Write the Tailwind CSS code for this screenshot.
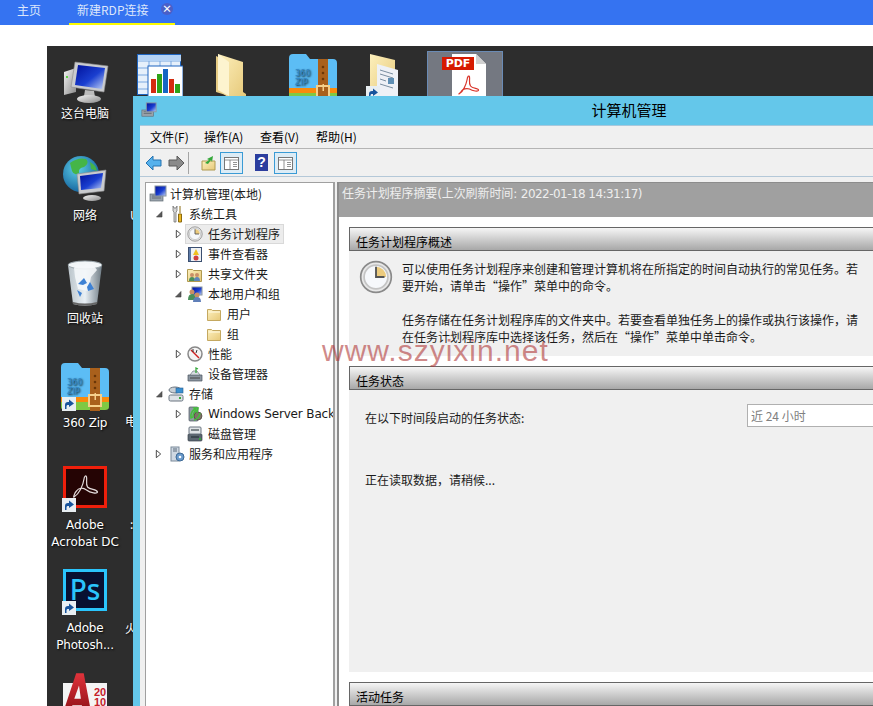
<!DOCTYPE html>
<html lang="zh-Hans">
<head>
<meta charset="UTF-8">
<title>新建RDP连接</title>
<script src="https://cdn.jsdelivr.net/npm/@tailwindcss/browser@4"></script>
</head>
<body class="bg-white overflow-hidden font-['Noto_Sans_CJK_SC','Liberation_Sans',sans-serif] text-[12px]">

<!-- shared icons -->
<svg class="absolute w-0 h-0">
  <defs>
    <linearGradient id="screen" x1="0" y1="0" x2="1" y2="1"><stop offset="0" stop-color="#00109a"/><stop offset=".55" stop-color="#1a3fd0"/><stop offset="1" stop-color="#c4d4f6"/></linearGradient>
    <linearGradient id="metal" x1="0" y1="0" x2="1" y2="1"><stop offset="0" stop-color="#f4f4f4"/><stop offset="1" stop-color="#8a8a8a"/></linearGradient>
    <linearGradient id="manila" x1="0" y1="0" x2="1" y2="1"><stop offset="0" stop-color="#fdf0bd"/><stop offset="1" stop-color="#e6c878"/></linearGradient>
    <radialGradient id="earth" cx=".4" cy=".35" r=".7"><stop offset="0" stop-color="#5fd0e8"/><stop offset="1" stop-color="#12609c"/></radialGradient>
    <linearGradient id="bin" x1="0" y1="0" x2="1" y2="0"><stop offset="0" stop-color="#b9c3c9"/><stop offset=".5" stop-color="#e9f0f5"/><stop offset="1" stop-color="#6f7c85"/></linearGradient>
    <linearGradient id="acad" x1="0" y1="0" x2="0" y2="1"><stop offset="0" stop-color="#e0333b"/><stop offset="1" stop-color="#8e1016"/></linearGradient>
    <symbol id="shortcut" viewBox="0 0 14 14"><rect width="14" height="14" fill="#e8eef2"/><path d="M3 12V8c0-2 1-3 3-3h1V2.500L12 6.500 7 10V8H6c-1 0-1.500 .5-1.500 1.500V12z" fill="#17539c"/></symbol>
    <symbol id="zipicon" viewBox="0 0 48 48">
      <path d="M0 4q0-4 4-4h13l4 5h23q4 0 4 4v29H0z" fill="#5cbdf5"/>
      <path d="M0 34h48v5H0z" fill="#f98a0c"/>
      <path d="M0 39h48v5q0 3-4 3H4q-4 0-4-3z" fill="#7fc944"/>
      <rect x="29" y="5" width="10" height="43" fill="#a9601c"/>
      <circle cx="34" cy="13" r="1.300" fill="#6b3607"/><circle cx="34" cy="19" r="1.300" fill="#6b3607"/><circle cx="34" cy="25" r="1.300" fill="#6b3607"/>
      <rect x="28" y="32" width="12" height="11" fill="none" stroke="#f6d08b" stroke-width="2"/>
      <rect x="33.500" y="30" width="1.500" height="7" fill="#f6d08b"/>
      <text x="6" y="22" font-size="8" font-family="DejaVu Sans" fill="#2f86c8">360</text>
      <text x="6" y="31" font-size="8" font-family="DejaVu Sans" fill="#2f86c8">ZIP</text>
    </symbol>
    <symbol id="folder16" viewBox="0 0 16 16">
      <path d="M1.500 3.500h4l1 1h8v10h-13z" fill="url(#manila)" stroke="#c4a860"/>
      <path d="M2.500 6h11.500" stroke="#fffbe6"/>
    </symbol>
    <symbol id="clock16" viewBox="0 0 20 20">
      <circle cx="10" cy="10" r="9" fill="#e8e8e8" stroke="#8a8a8a"/>
      <circle cx="10" cy="10" r="7" fill="#f6f8fb" stroke="#c4c4c4"/>
      <path d="M10 10V4a6 6 0 0 1 6 6z" fill="#eccb7d"/>
      <path d="M10 4v6h5" fill="none" stroke="#555" stroke-width="1.100"/>
    </symbol>
    <symbol id="pc16" viewBox="0 0 18 18">
      <rect x="1" y="9" width="13" height="7" fill="#9aa4ac" stroke="#5f6a72" stroke-width=".7"/>
      <path d="M3 11h9M3 13h9" stroke="#4d5860" stroke-width=".7"/>
      <rect x="6" y="1" width="11" height="10" fill="url(#screen)" stroke="#8a96a0"/>
    </symbol>
    <symbol id="tri-open" viewBox="0 0 8 8"><path d="M7 1.500V7H1.500z" fill="#595959" stroke="#404040" stroke-width=".6"/></symbol>
    <symbol id="tri-closed" viewBox="0 0 8 10"><path d="M1.500 .8 6.500 5 1.500 9.200z" fill="#fff" stroke="#333"/></symbol>
    <symbol id="winbtn" viewBox="0 0 23 22">
      <rect x=".5" y=".5" width="22" height="21" fill="#dcecf6" stroke="#3a9bd5"/>
      <rect x="4.500" y="5.500" width="14" height="12" fill="#fff" stroke="#777"/>
      <path d="M4.500 8h14M10 8v9.500M13 10.500h4M13 12.500h4M13 14.500h4" stroke="#777" stroke-width=".8"/>
    </symbol>
  </defs>
</svg>

<!-- 顶部标签栏 -->
<nav class="h-[25px] bg-[#3573f1] flex text-[#dce6fb] leading-[20px]">
  <a class="ml-[17px] w-[24px] whitespace-nowrap">主页</a>
  <div class="ml-[28px] w-[106px] h-[25px] border-b-2 border-[#fbfb00] flex pl-[8px]">
    <span class="w-[72px] whitespace-nowrap">新建RDP连接</span>
    <span class="ml-[12px] mt-[3px] w-[12px] h-[12px] rounded-full bg-[#4a5fc8] text-white text-[10px] leading-[12px] text-center font-bold">×</span>
  </div>
</nav>

<!-- 远程桌面 -->
<main class="relative ml-[47px] mt-[21px] h-[660px] bg-[#2d2d2d] overflow-hidden text-white [text-shadow:1px_1px_2px_#000]">

  <!-- 第一列图标 -->
  <div class="absolute left-0 top-0 w-[76px] text-center">
    <div class="absolute left-0 top-[12px] w-[76px]">
      <svg class="mx-auto w-[48px] h-[46px]" viewBox="0 0 48 46">
        <path d="M3 14l12-4v24l-12 3z" fill="url(#metal)"/>
        <rect x="5" y="18" width="2" height="2" fill="#5fd34a"/>
        <path d="M14 4l33 4-4 26-33-5z" fill="#c9cbce" stroke="#8b8b8b" stroke-width=".6"/>
        <path d="M17 7l27 3-3 21-27-4z" fill="url(#screen)"/>
        <path d="M24 32l9 1 1 6-11-1z" fill="#bcbcbc"/>
        <ellipse cx="28" cy="41" rx="12" ry="4" fill="url(#metal)"/>
      </svg>
      <p class="mt-[1px] text-center leading-[16px] text-[12px]">这台电脑</p>
    </div>
    <div class="absolute left-0 top-[109px] w-[76px]">
      <svg class="ml-[15px] w-[46px] h-[46px]" viewBox="0 0 46 46">
        <circle cx="19" cy="19" r="18" fill="url(#earth)"/>
        <path d="M8 8q8-6 16-4 4 4-2 8-6 1-5 6-5 3-7-2zM17 26q6-2 9 2-1 6-6 7-4-4-3-9zM28 7q6 3 7 9l-6-2z" fill="#45b548"/>
        <path d="M15 19l29-4-2 21-25 3z" fill="#c9cbce" stroke="#8b8b8b" stroke-width=".6"/>
        <path d="M18 21l23-3-2 15-20 2z" fill="url(#screen)"/>
        <ellipse cx="30" cy="43" rx="9" ry="3" fill="url(#metal)"/>
      </svg>
      <p class="mt-[6px] leading-[16px]">网络</p>
    </div>
    <div class="absolute left-0 top-[214px] w-[76px]">
      <svg class="ml-[19px] w-[38px] h-[46px]" viewBox="0 0 38 46">
        <path d="M2 5 7 44q12 3 24 0l5-39z" fill="url(#bin)"/>
        <ellipse cx="19" cy="5" rx="17" ry="4" fill="#f2f6f8" stroke="#9aa5ab"/>
        <path d="M8 8l3-4 6 2 5-3 6 3 3 4-6 7-3 14-10-2-3-12z" fill="#f4f7fa" opacity=".9"/>
        <path d="M12 24l6-6 3 5-4 2zM24 22l4 7-6 2-1-4zM11 30l5 3-2 4z" fill="#3f82d4"/>
        <path d="M7 42q12 3 24 0v2q-12 3-24 0z" fill="#666"/>
      </svg>
      <p class="mt-[4px] leading-[16px]">回收站</p>
    </div>
    <div class="absolute left-0 top-[317px] w-[76px]">
      <div class="relative ml-[14px] w-[48px] h-[48px]">
        <svg class="w-[48px] h-[48px]"><use href="#zipicon"/></svg>
        <svg class="absolute left-[1px] bottom-[0px] w-[14px] h-[14px]"><use href="#shortcut"/></svg>
      </div>
      <p class="mt-[4px] leading-[16px] tracking-[-.2px] font-['DejaVu_Sans',sans-serif]">360 Zip</p>
    </div>
    <div class="absolute left-0 top-[420px] w-[76px]">
      <div class="relative ml-[16px] w-[44px] h-[46px]">
        <svg class="w-[44px] h-[42px]" viewBox="0 0 44 42">
          <rect x="1.500" y="1.500" width="41" height="39" fill="#250404" stroke="#f01f0b" stroke-width="3"/>
          <path d="M11 31c5-3 9-11 10-18 .3-3 2-4 2.500-2 .8 3-1 7 1 10 3 3 9 2 10 5 0 2-7 1-11-2-4-3-8-2-10 1-2 2-3.500 7-2.500 6z" fill="none" stroke="#e4dcdc" stroke-width="1.200"/>
        </svg>
        <svg class="absolute left-[-1px] top-[32px] w-[14px] h-[14px]"><use href="#shortcut"/></svg>
      </div>
      <p class="mt-[5px] leading-[17px] font-['DejaVu_Sans',sans-serif] whitespace-nowrap">Adobe<br>Acrobat DC</p>
    </div>
    <div class="absolute left-0 top-[523px] w-[76px]">
      <div class="relative ml-[16px] w-[44px] h-[46px]">
        <div class="w-[44px] h-[42px] border-[3px] border-[#2ac4fc] bg-[#081031] text-[#2ac4fc] text-[28px] leading-[34px] font-medium text-center font-['Noto_Sans',sans-serif] [text-shadow:none]">Ps</div>
        <svg class="absolute left-[-1px] top-[32px] w-[14px] h-[14px]"><use href="#shortcut"/></svg>
      </div>
      <p class="mt-[5px] leading-[17px] tracking-[-.2px] font-['DejaVu_Sans',sans-serif] whitespace-nowrap">Adobe<br>Photosh...</p>
    </div>
    <div class="absolute left-[16px] top-[637px] w-[44px] h-[30px] bg-[#f4f4f4]">
      <svg class="absolute left-0 top-[-10px] w-[32px] h-[44px]" viewBox="0 0 34 46">
        <path d="M0 42 14 0h8l8 42h-8l-2-8H10l-3 8zM12 27h7l-2-14z" fill="url(#acad)"/>
      </svg>
      <p class="absolute left-[31px] top-[4px] text-[#c4202a] text-[11px] leading-[10px] font-bold font-['Liberation_Sans',sans-serif] [text-shadow:none]">20<br>10</p>
    </div>
  </div>

  <!-- 第二列被窗口遮住的文字 -->
  <span class="absolute left-[83px] top-[161px] leading-[16px]">U</span>
  <span class="absolute left-[78px] top-[367px] leading-[16px]">电</span>
  <span class="absolute left-[83px] top-[470px] leading-[16px]">:</span>
  <span class="absolute left-[78px] top-[574px] leading-[16px]">火</span>

  <!-- 顶排图标 -->
  <svg class="absolute left-[90px] top-[8px] w-[46px] h-[44px]" viewBox="0 0 46 44">
    <rect x=".5" y=".5" width="43" height="40" fill="#e6f0fb" stroke="#1f65c0"/>
    <path d="M1 7h43M1 14h43M1 21h43M1 28h43M1 35h43M12 1v40M23 1v40M34 1v40" stroke="#7aa8e0"/>
    <path d="M1 1h43v6H1z" fill="#b5d3f5"/>
    <rect x="11" y="12" width="35" height="32" fill="#fff" stroke="#1f65c0"/>
    <rect x="14" y="25" width="5" height="14" fill="#d42c10"/><rect x="20" y="20" width="5" height="19" fill="#2ea318"/><rect x="26" y="15" width="5" height="24" fill="#1566c4"/><rect x="32" y="25" width="5" height="14" fill="#d42c10"/><rect x="38" y="30" width="5" height="9" fill="#2ea318"/>
  </svg>
  <svg class="absolute left-[168px] top-[8px] w-[32px] h-[44px]" viewBox="0 0 32 44">
    <path d="M1 2 14 8v34L1 38z" fill="#e8cd85"/>
    <path d="M3 0 28 8v30l3 2v4H14L3 36z" fill="url(#manila)"/>
    <path d="M3 0 14 8v34L3 36z" fill="#fdf4cf"/>
  </svg>
  <svg class="absolute left-[242px] top-[8px] w-[48px] h-[48px]"><use href="#zipicon"/></svg>
  <div class="absolute left-[320px] top-[8px] w-[32px] h-[44px]">
    <svg class="w-[32px] h-[44px]" viewBox="0 0 32 44">
      <path d="M3 0 28 6v38H3z" fill="url(#manila)"/>
      <path d="M10 10 31 16v28H10z" fill="#eef1f6"/>
      <path d="M13 16l13 4M13 20l13 4M13 25l6 2M13 30l13 4" stroke="#7a8ea0"/>
      <rect x="21" y="24" width="6" height="6" fill="#5f8fb4"/>
    </svg>
    <svg class="absolute left-[-1px] top-[32px] w-[14px] h-[14px]"><use href="#shortcut"/></svg>
  </div>
  <div class="absolute left-[380px] top-[5px] w-[76px] h-[50px] bg-[#747881] border border-[#6a8bb5]">
    <svg class="absolute left-[24px] top-[2px] w-[34px] h-[48px]" viewBox="0 0 34 48">
      <path d="M0 0H24L34 10V48H0z" fill="#fff"/>
      <path d="M24 0 34 10H24z" fill="#d0d0d0"/>
      <path d="M7 40c4-2 7-9 8-14 .5-4 2-5 2.500-3 .5 3-1 6 1 9 2 3 8 2 8 4 0 2-6 1-9-1-3-1-7 0-8 2-1 2-3 3-2.500 3z" fill="none" stroke="#d9342a" stroke-width="1.200"/>
    </svg>
    <span class="absolute left-[14px] top-[5px] w-[32px] h-[13px] bg-[#d61a00] text-white text-[11px] leading-[13px] font-bold text-center font-['DejaVu_Sans',sans-serif] [text-shadow:none]">PDF</span>
  </div>

  <!-- 计算机管理窗口 -->
  <section class="absolute left-[86px] top-[50px] w-[992px] h-[640px] bg-[#64c7ea] flex flex-col text-black [text-shadow:none]">
    <header class="relative h-[29px] shrink-0 flex items-center justify-center text-[15px]">
      <svg class="absolute left-[8px] top-[6px] w-[16px] h-[16px]"><use href="#pc16"/></svg>
      <h1>计算机管理</h1>
    </header>
    <div class="ml-[7px] flex-1 flex flex-col bg-[#f0f0f0] min-h-0">
      <!-- 菜单 -->
      <div class="h-[24px] shrink-0 flex items-center pl-[10px] border-b border-[#b4b4b4] border-t border-t-[#a8c8dc]">
        <span class="w-[54px]">文件(F)</span><span class="w-[56px]">操作(A)</span><span class="w-[56px]">查看(V)</span><span>帮助(H)</span>
      </div>
      <!-- 工具栏 -->
      <div class="h-[28px] shrink-0 flex items-center pl-[5px] border-b border-[#b4c8d8]">
        <svg class="w-[17px] h-[16px]" viewBox="0 0 17 16"><path d="M1 8 8 1v4h8v6H8v4z" fill="#55b1ec" stroke="#2672b0"/></svg>
        <svg class="ml-[6px] w-[17px] h-[16px]" viewBox="0 0 17 16"><path d="M16 8 9 1v4H1v6h8v4z" fill="#8b8b8b" stroke="#5b5b5b"/></svg>
        <span class="ml-[3px] w-px h-[22px] bg-[#a5a5a5]"></span>
        <svg class="ml-[12px] w-[15px] h-[16px]" viewBox="0 0 15 16"><path d="M1 6h13v9H1z" fill="url(#manila)" stroke="#b09a50"/><path d="M4 8l4-3-2-1 6-3-1 6-1-2-3 4z" fill="#35a83a"/></svg>
        <svg class="ml-[4px] w-[23px] h-[22px]"><use href="#winbtn"/></svg>
        <span class="ml-[12px] w-[13px] h-[17px] bg-[#2c3e9e] text-white text-[14px] leading-[17px] font-bold text-center font-['Liberation_Sans',sans-serif]">?</span>
        <svg class="ml-[6px] w-[23px] h-[22px]"><use href="#winbtn"/></svg>
      </div>
      <div class="h-[5px] shrink-0"></div>

      <div class="flex-1 flex min-h-0">
        <!-- 树 -->
        <aside class="ml-[5px] w-[190px] shrink-0 bg-white border-l border-t border-[#a0a0a0] border-r-2 pt-[1px] overflow-hidden whitespace-nowrap text-[#1a1a1a]">
          <div class="h-[20px] flex items-center pl-[3px]"><svg class="shrink-0 w-[18px] h-[18px]"><use href="#pc16"/></svg><span class="ml-[3px]">计算机管理(本地)</span></div>
          <div class="h-[20px] flex items-center pl-[9px]"><svg class="shrink-0 w-[8px] h-[8px]"><use href="#tri-open"/></svg>
            <svg class="shrink-0 ml-[7px] w-[14px] h-[18px]" viewBox="0 0 14 18"><path d="M3 1v5l1 1v10h2V7l1-1V1L6 3H4z" fill="#d8d8d8" stroke="#666" stroke-width=".7"/><path d="M10 1v7M8.500 9h3v8h-3z" fill="#eeb820" stroke="#8a6a10"/></svg>
            <span class="ml-[5px]">系统工具</span></div>
          <div class="h-[20px] flex items-center pl-[29px]"><svg class="shrink-0 w-[7px] h-[10px]"><use href="#tri-closed"/></svg>
            <div class="ml-[3px] h-[20px] w-[99px] flex items-center bg-[#ececec] border border-[#d9d9d9]"><svg class="shrink-0 ml-[1px] w-[16px] h-[16px]"><use href="#clock16"/></svg><span class="ml-[5px]">任务计划程序</span></div></div>
          <div class="h-[20px] flex items-center pl-[29px]"><svg class="shrink-0 w-[7px] h-[10px]"><use href="#tri-closed"/></svg>
            <svg class="shrink-0 ml-[6px] w-[14px] h-[15px]" viewBox="0 0 14 15"><rect x=".5" y=".5" width="13" height="14" fill="#5d7ba8" stroke="#3b4f70"/><rect x="3" y="1" width="10" height="13" fill="#eef1f5"/><path d="M8 2l3 6H5z" fill="#f0c020"/><circle cx="8" cy="11" r="2.500" fill="#d04040"/></svg>
            <span class="ml-[6px]">事件查看器</span></div>
          <div class="h-[20px] flex items-center pl-[29px]"><svg class="shrink-0 w-[7px] h-[10px]"><use href="#tri-closed"/></svg>
            <svg class="shrink-0 ml-[5px] w-[15px] h-[15px]" viewBox="0 0 15 15"><path d="M.5 2.500h5l1 1h8v11H.5z" fill="url(#manila)" stroke="#b09a50"/><circle cx="5" cy="8" r="2" fill="#c98f66"/><path d="M2 14q0-4 3-4t3 4z" fill="#4a8f5a"/><circle cx="10" cy="8" r="2" fill="#c98f66"/><path d="M7 14q0-4 3-4t3 4z" fill="#5f86b8"/></svg>
            <span class="ml-[6px]">共享文件夹</span></div>
          <div class="h-[20px] flex items-center pl-[28px]"><svg class="shrink-0 w-[8px] h-[8px]"><use href="#tri-open"/></svg>
            <svg class="shrink-0 ml-[5px] w-[16px] h-[16px]" viewBox="0 0 16 16"><rect x="5" y="1" width="10" height="8" fill="url(#screen)" stroke="#8a96a0"/><circle cx="5" cy="6" r="2.500" fill="#c98f66"/><path d="M1 14q0-6 4-6t4 6z" fill="#4a8f5a"/><circle cx="10" cy="9" r="2.500" fill="#c98f66"/><path d="M6 16q0-5 4-5t4 5z" fill="#5f7fb8"/></svg>
            <span class="ml-[5px]">本地用户和组</span></div>
          <div class="h-[20px] flex items-center pl-[60px]"><svg class="shrink-0 w-[16px] h-[16px]"><use href="#folder16"/></svg><span class="ml-[5px]">用户</span></div>
          <div class="h-[20px] flex items-center pl-[60px]"><svg class="shrink-0 w-[16px] h-[16px]"><use href="#folder16"/></svg><span class="ml-[5px]">组</span></div>
          <div class="h-[20px] flex items-center pl-[29px]"><svg class="shrink-0 w-[7px] h-[10px]"><use href="#tri-closed"/></svg>
            <svg class="shrink-0 ml-[5px] w-[16px] h-[16px]" viewBox="0 0 16 16"><circle cx="8" cy="8" r="7" fill="#f4f4f4" stroke="#888" stroke-width="1.500"/><path d="M4 4l8 8" stroke="#d02020" stroke-width="1.500"/><path d="M6 3v3M10 4l-1 3" stroke="#333"/></svg>
            <span class="ml-[5px]">性能</span></div>
          <div class="h-[20px] flex items-center pl-[41px]"><svg class="shrink-0 w-[16px] h-[16px]" viewBox="0 0 16 16"><path d="M1 9h14v6H1z" fill="#8b95a0" stroke="#4a5560" stroke-width=".7"/><path d="M3 9l3-4h4l3 4z" fill="#d8dde2" stroke="#6a7580" stroke-width=".7"/><path d="M9 7V2l2 1" stroke="#35a83a" fill="none" stroke-width="1.300"/><path d="M3 12h10" stroke="#444"/></svg><span class="ml-[5px]">设备管理器</span></div>
          <div class="h-[20px] flex items-center pl-[9px]"><svg class="shrink-0 w-[8px] h-[8px]"><use href="#tri-open"/></svg>
            <svg class="shrink-0 ml-[5px] w-[16px] h-[16px]" viewBox="0 0 16 16"><ellipse cx="7" cy="4" rx="6" ry="3" fill="#c9d0d6" stroke="#6a7580"/><rect x="8" y="2" width="7" height="5" fill="#3a8fd0" stroke="#2a5f90" stroke-width=".6"/><rect x="1" y="9" width="14" height="6" rx="1.500" fill="#dde2e6" stroke="#6a7580"/><rect x="11" y="11" width="2" height="2" fill="#35a83a"/></svg>
            <span class="ml-[5px]">存储</span></div>
          <div class="h-[20px] flex items-center pl-[29px]"><svg class="shrink-0 w-[7px] h-[10px]"><use href="#tri-closed"/></svg>
            <svg class="shrink-0 ml-[5px] w-[16px] h-[16px]" viewBox="0 0 16 16"><rect x="2" y="1" width="9" height="14" rx="1" fill="#8f9aa3" stroke="#4a5560" stroke-width=".7"/><circle cx="11" cy="10" r="4" fill="#7d7367" stroke="#4a4036" stroke-width=".7"/><path d="M4 12Q3 6 8 3l-1-1 4 0-1 4-1-2q-3 3-3 7zM7 14q5-1 6-7" fill="none" stroke="#45c03c" stroke-width="1.500"/></svg>
            <span class="ml-[5px] tracking-[-.15px] font-['DejaVu_Sans',sans-serif]">Windows Server Back</span></div>
          <div class="h-[20px] flex items-center pl-[41px]"><svg class="shrink-0 w-[16px] h-[16px]" viewBox="0 0 16 16"><rect x="1" y="8" width="14" height="7" rx="1" fill="#5b6670" stroke="#3a444c" stroke-width=".7"/><rect x="2" y="1" width="12" height="7" rx="1" fill="#dfe3e6" stroke="#6a7580"/><path d="M4 4h8M4 11h8" stroke="#1f2a30"/><rect x="12" y="12" width="2" height="2" fill="#35a83a"/></svg><span class="ml-[5px]">磁盘管理</span></div>
          <div class="h-[20px] flex items-center pl-[9px]"><svg class="shrink-0 w-[7px] h-[10px]"><use href="#tri-closed"/></svg>
            <svg class="shrink-0 ml-[8px] w-[15px] h-[16px]" viewBox="0 0 15 16"><rect x="1" y="1" width="8" height="14" fill="#cfd8e2" stroke="#7a8a9a"/><path d="M3 3h4M3 5h4" stroke="#5a6a7a"/><circle cx="10" cy="11" r="4" fill="#6a9acb" stroke="#3f6a95"/><circle cx="10" cy="11" r="1.300" fill="#fff"/></svg>
            <span class="ml-[4px]">服务和应用程序</span></div>
        </aside>

        <!-- 右侧摘要 -->
        <div class="ml-[2px] flex-1 border-l-2 border-t border-[#8c8c8c] bg-white flex flex-col min-w-0">
          <div class="h-[34px] shrink-0 bg-[#a0a0a0] text-[#eeeeee] pl-[3px] leading-[22px] font-['DejaVu_Sans','Noto_Sans_CJK_SC',sans-serif] text-[12px] tracking-[-.1px]">任务计划程序摘要(上次刷新时间: <span class="tracking-[-.55px]">2022-01-18 14:31:17</span>)</div>
          <div class="pl-[10px] pt-[10px] flex flex-col">
            <h2 class="h-[24px] pl-[6px] leading-[27px] border-t border-b border-[#666] border-l bg-linear-to-b from-[#f6f6f6] to-[#a8a8a8]">任务计划程序概述</h2>
            <div class="h-[105px] bg-[#f0f0f0] flex">
              <svg class="ml-[10px] mt-[9px] w-[34px] h-[34px] shrink-0"><use href="#clock16"/></svg>
              <div class="ml-[9px] mt-[10px] leading-[16.500px] whitespace-nowrap text-[#1a1a1a]">
                <p>可以使用任务计划程序来创建和管理计算机将在所指定的时间自动执行的常见任务。若</p>
                <p>要开始，请单击“操作”菜单中的命令。</p>
                <p class="mt-[18px]">任务存储在任务计划程序库的文件夹中。若要查看单独任务上的操作或执行该操作，请</p>
                <p>在任务计划程序库中选择该任务，然后在“操作”菜单中单击命令。</p>
              </div>
            </div>
            <h2 class="mt-[10px] h-[24px] pl-[6px] leading-[27px] border-t border-b border-[#666] border-l bg-linear-to-b from-[#f6f6f6] to-[#a8a8a8]">任务状态</h2>
            <div class="h-[282px] bg-[#f0f0f0] text-[#1a1a1a]">
              <div class="pl-[16px] pt-[14px] flex items-start h-[37px]">
                <span class="w-[382px] mt-[5px] leading-[18px]">在以下时间段启动的任务状态:</span>
                <div class="w-[160px] h-[23px] border border-[#b0b0b0] bg-white text-[#808080] pl-[3px] leading-[21px]">近 24 小时</div>
              </div>
              <p class="pl-[16px] mt-[44px]">正在读取数据，请稍候...</p>
            </div>
            <h2 class="mt-[10px] h-[24px] pl-[6px] leading-[27px] border-t border-b border-[#666] border-l bg-linear-to-b from-[#f6f6f6] to-[#a8a8a8]">活动任务</h2>
          </div>
        </div>
      </div>
    </div>
  </section>
</main>

<!-- 水印 -->
<div class="absolute left-[322px] top-[335px] text-[30px] leading-[32px] tracking-[1px] text-[#b03a3a]/60 font-['Liberation_Sans',sans-serif] whitespace-nowrap">www.szyixin.net</div>
</body>
</html>
